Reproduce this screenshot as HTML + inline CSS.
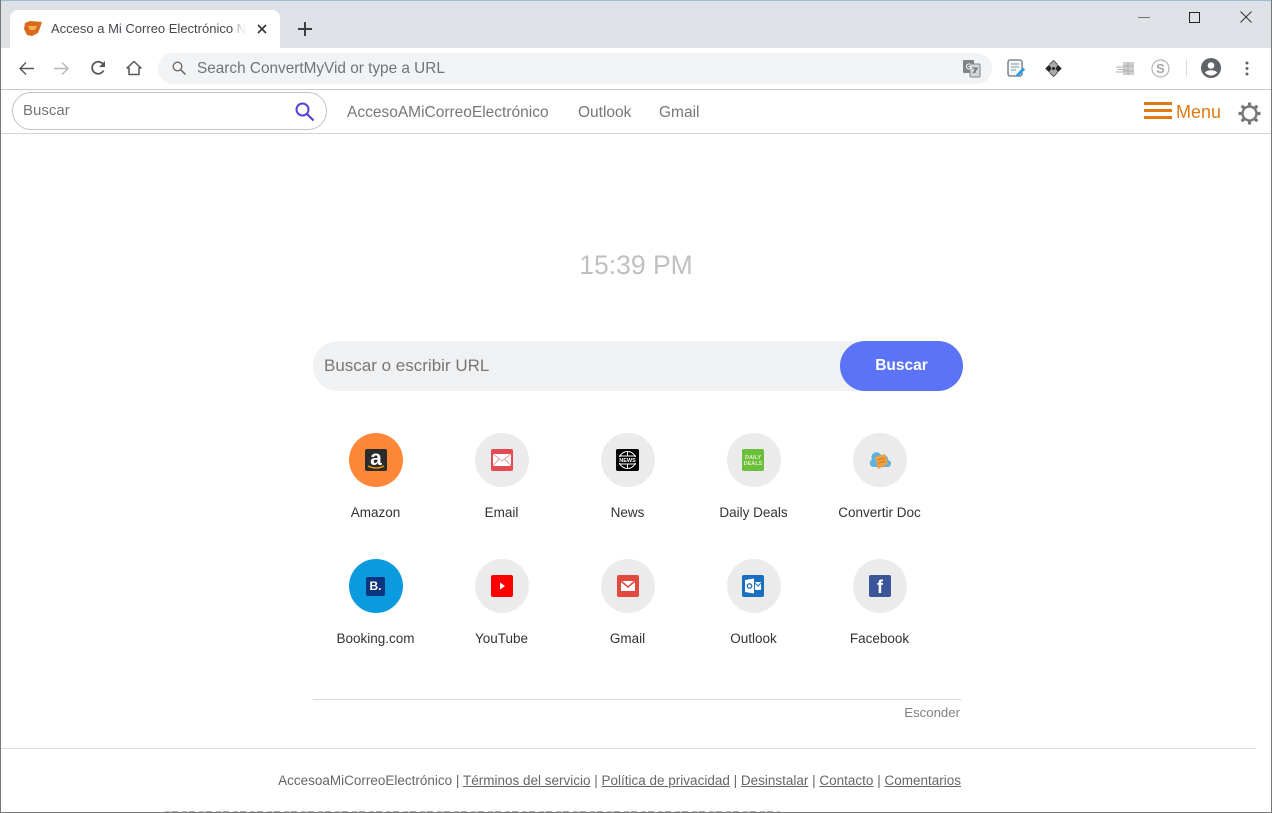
<!DOCTYPE html>
<html lang="es"><head><meta charset="utf-8"><title>Acceso a Mi Correo Electrónico</title>
<style>
html,body{margin:0;padding:0;width:1272px;height:813px;overflow:hidden;background:#fff}
body{position:relative;font-family:"Liberation Sans",sans-serif;color:#333}
.a{position:absolute;white-space:nowrap}
svg{position:absolute;overflow:visible}
.c{position:absolute;width:54px;height:54px;border-radius:50%;background:#ebebeb}
.l{position:absolute;width:126px;text-align:center;font-size:13.5px;line-height:16px;color:#333}
.s{position:absolute;width:22px;height:22px;border-radius:2px}
.nav{position:absolute;top:104px;font-size:15.5px;line-height:18px;color:#777;white-space:nowrap}
u{text-decoration:underline}
</style></head><body>
<!-- chrome top -->
<div class="a" style="left:0;top:0;width:1272px;height:48px;background:#dee1e6"></div>
<div class="a" style="left:0;top:0;width:1272px;height:1px;background:#9fbcd6"></div>
<div class="a" style="left:10px;top:10px;width:270px;height:38px;background:#fff;border-radius:8px 8px 0 0"></div>
<svg style="left:23px;top:20px" width="20" height="17" viewBox="0 0 20 17"><path d="M2 3L7 1L19 2L17 8L15 13L9 16L4 15L1 9Z" fill="#d9691c"/><path d="M5 6H14L12 10H7Z" fill="#f3b155"/></svg>
<div class="a" style="left:51px;top:21px;width:197px;overflow:hidden;font-size:13px;line-height:16px;color:#45484d">Acceso a Mi Correo Electrónico N</div>
<div class="a" style="left:234px;top:20px;width:14px;height:18px;background:linear-gradient(90deg,rgba(255,255,255,.4),rgba(255,255,255,.85) 60%,#fff)"></div>
<svg style="left:257px;top:24px" width="10" height="10"><path d="M1 1L9 9M9 1L1 9" stroke="#333" stroke-width="1.6"/></svg>
<svg style="left:298px;top:22px" width="14" height="14"><path d="M7 0V14M0 7H14" stroke="#3c4043" stroke-width="2"/></svg>
<!-- window controls -->
<div class="a" style="left:1138px;top:16.500px;width:12px;height:1.500px;background:#777"></div>
<div class="a" style="left:1189px;top:12px;width:9px;height:9px;border:1px solid #222"></div>
<svg style="left:1240px;top:11px" width="12" height="12"><path d="M.5 .5L11.5 11.5M11.5 .5L.5 11.5" stroke="#333" stroke-width="1"/></svg>
<!-- toolbar -->
<div class="a" style="left:0;top:48px;width:1272px;height:41px;background:#fff;border-bottom:1px solid #c9c9c9"></div>
<svg style="left:18px;top:61px" width="16" height="16"><path d="M16 7.500H2M8 1.500L2 7.500L8 13.500" fill="none" stroke="#54585d" stroke-width="1.400"/></svg>
<svg style="left:54px;top:61px" width="16" height="16"><path d="M0 7.500H14M8 1.500L14 7.500L8 13.500" fill="none" stroke="#b4b6b9" stroke-width="1.400"/></svg>
<svg style="left:90px;top:60px" width="16" height="16" viewBox="0 0 16 16"><path d="M13.500 10.500A6 6 0 1 1 13.500 5" fill="none" stroke="#54585d" stroke-width="1.800"/><path d="M15 1V7H9Z" fill="#54585d"/></svg>
<svg style="left:126px;top:60px" width="16" height="16" viewBox="0 0 16 16"><path d="M8 1.500L1 8H3V14.500H13V8H15ZM8 1.500" fill="none" stroke="#54585d" stroke-width="1.500" stroke-linejoin="round"/></svg>
<div class="a" style="left:158px;top:53px;width:834px;height:31px;background:#f1f3f4;border-radius:16px"></div>
<svg style="left:172px;top:61px" width="15" height="15"><circle cx="5.500" cy="5.500" r="4.300" fill="none" stroke="#666" stroke-width="1.300"/><path d="M8.800 8.800L13.500 13.500" stroke="#666" stroke-width="1.500"/></svg>
<div class="a" style="left:197px;top:60px;font-size:15.350px;line-height:18px;color:#70757a">Search ConvertMyVid or type a URL</div>
<svg style="left:963px;top:60px" width="18" height="18" viewBox="0 0 18 18"><rect x="0" y="0" width="11" height="13" rx="1" fill="#808589"/><rect x="7" y="4" width="10" height="13" rx="1" fill="#d4d6d8" stroke="#808589"/><path d="M7.500 4.500A2.500 2.500 0 1 0 7.500 8.500V6.500H5.500" fill="none" stroke="#fff" stroke-width="1"/><path d="M9 8H15M12 8V13M10 13L14 9" fill="none" stroke="#666" stroke-width="1"/></svg>
<svg style="left:1007px;top:59px" width="20" height="20" viewBox="0 0 20 20"><rect x="1" y="1" width="14" height="16" rx="2" fill="#f4f6f8" stroke="#6a7480" stroke-width="1.300"/><path d="M4 5H12M4 8H12M4 11H9" stroke="#9aa8b5" stroke-width="1.200"/><path d="M10 17L17 9.500" stroke="#2c9be8" stroke-width="3"/></svg>
<svg style="left:1045px;top:60px" width="17" height="17" viewBox="0 0 17 17"><path d="M8.500 0L17 8.500L8.500 17L0 8.500Z" fill="#aaa"/><path d="M0.500 8.500L4 5L6.500 8.500L4 12ZM16.500 8.500L13 5L10.500 8.500L13 12Z" fill="#222"/><circle cx="8.500" cy="8.500" r="1.500" fill="#222"/><path d="M8.500 .5L12.500 4.500M8.500 .5L4.500 4.500M8.500 16.500L12.500 12.500M8.500 16.500L4.500 12.500" stroke="#555" stroke-width="1"/></svg>
<svg style="left:1116px;top:61px" width="19" height="15" viewBox="0 0 19 15"><rect x="7" y="1" width="11" height="13" fill="#cfcfcf"/><path d="M0 6H7M2 8.500H9M0 11H7M12 1V14M7 5H18M7 10H18" stroke="#adadad"/></svg>
<svg style="left:1151px;top:59px" width="19" height="19"><circle cx="9.500" cy="9.500" r="8.500" fill="none" stroke="#b4b4b4" stroke-width="1.200"/><text x="9.500" y="14" text-anchor="middle" font-size="13" font-weight="700" font-family="Liberation Sans" fill="#a6a6a6">S</text></svg>
<div class="a" style="left:1186px;top:59px;width:1px;height:18px;background:#dadce0"></div>
<svg style="left:1201px;top:58px" width="20" height="20" viewBox="0 0 20 20"><circle cx="10" cy="10" r="10" fill="#5f6368"/><circle cx="10" cy="7.500" r="3.300" fill="#fff"/><path d="M3.800 14.500C6 11.500 14 11.500 16.200 14.500C14.500 16.500 12 17.500 10 17.500C8 17.500 5.500 16.500 3.800 14.500Z" fill="#fff"/></svg>
<svg style="left:1245px;top:61px" width="4" height="15"><circle cx="2" cy="2" r="1.500" fill="#5f6368"/><circle cx="2" cy="7.500" r="1.500" fill="#5f6368"/><circle cx="2" cy="13" r="1.500" fill="#5f6368"/></svg>
<!-- nav bar -->
<div class="a" style="left:0;top:133px;width:1272px;height:1px;background:#d4d4d4"></div>
<div class="a" style="left:12px;top:92px;width:313px;height:36px;border:1px solid #c4c4c4;border-radius:19px;background:#fff"></div>
<div class="a" style="left:23px;top:102px;font-size:15px;line-height:18px;color:#757575">Buscar</div>
<svg style="left:295px;top:102px" width="19" height="19"><circle cx="7.500" cy="7.500" r="6" fill="none" stroke="#5b3fd6" stroke-width="2"/><path d="M12 12L18.500 18.500" stroke="#5b3fd6" stroke-width="2.200"/></svg>
<div class="nav" style="left:347px">AccesoAMiCorreoElectrónico</div>
<div class="nav" style="left:578px">Outlook</div>
<div class="nav" style="left:659px">Gmail</div>
<div class="a" style="left:1144px;top:102px;width:28px;height:3px;background:#e07a14"></div>
<div class="a" style="left:1144px;top:109px;width:28px;height:3px;background:#e07a14"></div>
<div class="a" style="left:1144px;top:116px;width:28px;height:3px;background:#e07a14"></div>
<div class="a" style="left:1176px;top:102px;font-size:18px;line-height:21px;color:#e07a14">Menu</div>
<svg style="left:1238px;top:102px" width="23" height="23" viewBox="0 0 23 23"><circle cx="11.500" cy="11.500" r="7" fill="none" stroke="#777" stroke-width="2.400"/><path d="M11.500 0.500V4.500M11.500 18.500V22.500M.5 11.500H4.500M18.500 11.500H22.500M3.700 3.700L6.500 6.500M16.500 16.500L19.300 19.300M19.300 3.700L16.500 6.500M6.500 16.500L3.700 19.300" stroke="#777" stroke-width="3.200"/></svg>
<!-- main -->
<div class="a" style="left:436px;width:400px;top:248px;text-align:center;font-size:26.500px;line-height:34px;color:#c0c0c0">15:39 PM</div>
<div class="a" style="left:313px;top:341px;width:650px;height:50px;background:#f0f1f3;border-radius:25px"></div>
<div class="a" style="left:840px;top:341px;width:123px;height:50px;background:#5b73f6;border-radius:25px"></div>
<div class="a" style="left:324px;top:356px;font-size:17px;line-height:20px;color:#777">Buscar o escribir URL</div>
<div class="a" style="left:840px;top:356px;width:123px;text-align:center;font-size:15.500px;line-height:20px;font-weight:700;color:#fff">Buscar</div>
<!-- row 1 -->
<div class="c" style="left:349px;top:433px;background:#ff8838"></div>
<div class="s" style="left:365px;top:449px;background:#2b2b2b"></div>
<div class="a" style="left:365px;top:447px;width:22px;text-align:center;font-size:21px;line-height:24px;font-weight:700;color:#fff">a</div>
<svg style="left:367px;top:465px" width="18" height="5"><path d="M1 1Q9 5 17 1" fill="none" stroke="#f90" stroke-width="1.300"/></svg>
<div class="l" style="left:312.500px;top:505px">Amazon</div>
<div class="c" style="left:475px;top:433px"></div>
<div class="s" style="left:491px;top:449px;background:#e14b52"></div>
<svg style="left:491px;top:449px" width="22" height="22"><rect x="2" y="5" width="18" height="12" fill="#fff"/><path d="M2 5L11 12L20 5M2 17L8 10M20 17L14 10" fill="none" stroke="#e8a0a4" stroke-width="1"/></svg>
<div class="l" style="left:438.500px;top:505px">Email</div>
<div class="c" style="left:601px;top:433px"></div>
<div class="s" style="left:616px;top:449px;width:23px;background:#000"></div>
<svg style="left:616px;top:449px" width="23" height="22"><circle cx="11.500" cy="11" r="8.500" fill="none" stroke="#fff"/><path d="M3 7H20M3 15H20M11.500 2.500V7M11.500 15V19.500" stroke="#fff"/><rect x="2" y="8" width="19" height="6" fill="#000"/><text x="11.500" y="13" text-anchor="middle" font-size="5.500" font-weight="700" font-family="Liberation Sans" fill="#fff">NEWS</text></svg>
<div class="l" style="left:564.500px;top:505px">News</div>
<div class="c" style="left:727px;top:433px"></div>
<div class="s" style="left:742px;top:449px;background:#6cbf3a"></div>
<div class="a" style="left:742px;top:455px;width:22px;text-align:center;font-size:5.500px;line-height:6px;font-weight:700;color:#d9f0c5">DAILY<br>DEALS</div>
<div class="l" style="left:690.500px;top:505px">Daily Deals</div>
<div class="c" style="left:853px;top:433px"></div>
<svg style="left:870px;top:452px" width="20" height="18" viewBox="0 0 20 18"><path d="M3 15A4 4 0 0 1 2 7.500A5 5 0 0 1 11 3A5 5 0 0 1 18 8A3.500 3.500 0 0 1 17 15Z" fill="#5eb1e0"/><path d="M5 5L15 2L18 12L8 17Z" fill="#f0a040"/><path d="M7.500 8L15 6M8.500 11L15.500 9" stroke="#c97a1e"/></svg>
<div class="l" style="left:816.500px;top:505px">Convertir Doc</div>
<!-- row 2 -->
<div class="c" style="left:349px;top:559px;background:#0c9ade"></div>
<div class="s" style="left:366px;top:577px;width:19px;height:19px;background:#0c3580"></div>
<div class="a" style="left:366px;top:578px;width:19px;text-align:center;font-size:12px;line-height:17px;font-weight:700;color:#fff">B.</div>
<div class="l" style="left:312.500px;top:631px">Booking.com</div>
<div class="c" style="left:475px;top:559px"></div>
<div class="s" style="left:491px;top:575px;background:#ff0000"></div>
<svg style="left:491px;top:575px" width="22" height="22"><path d="M9 7.500L14 11L9 14.500Z" fill="#fff"/></svg>
<div class="l" style="left:438.500px;top:631px">YouTube</div>
<div class="c" style="left:601px;top:559px"></div>
<div class="s" style="left:617px;top:575px;background:#e2493f"></div>
<svg style="left:617px;top:575px" width="22" height="22"><rect x="4" y="6" width="14" height="10" fill="#fff"/><path d="M4 6L11 12L18 6" fill="none" stroke="#e2493f" stroke-width="1.600"/></svg>
<div class="l" style="left:564.500px;top:631px">Gmail</div>
<div class="c" style="left:727px;top:559px"></div>
<div class="s" style="left:742px;top:575px;background:#1a6fc0"></div>
<svg style="left:742px;top:575px" width="22" height="22"><path d="M3 5L12 3.500V18.500L3 17Z" fill="#fff"/><circle cx="7.500" cy="11" r="2.200" fill="none" stroke="#1a6fc0" stroke-width="1.300"/><path d="M13 7H19V15H13Z" fill="#fff"/><path d="M13 8L16 11L19 8" fill="none" stroke="#1a6fc0"/></svg>
<div class="l" style="left:690.500px;top:631px">Outlook</div>
<div class="c" style="left:853px;top:559px"></div>
<div class="s" style="left:869px;top:575px;background:#3b5598"></div>
<div class="a" style="left:869px;top:576px;width:22px;text-align:center;font-size:18px;line-height:22px;font-weight:700;color:#fff">f</div>
<div class="l" style="left:816.500px;top:631px">Facebook</div>
<!-- footer -->
<div class="a" style="left:313px;top:699px;width:648px;height:1px;background:#d8d8d8"></div>
<div class="a" style="right:312px;top:705px;font-size:13.200px;line-height:16px;color:#808080">Esconder</div>
<div class="a" style="left:0;top:748px;width:1256px;height:1px;background:#dcdcdc"></div>
<div class="a" style="right:311px;top:773px;font-size:13.500px;line-height:16px;color:#666">AccesoaMiCorreoElectrónico | <u>Términos del servicio</u> | <u>Política de privacidad</u> | <u>Desinstalar</u> | <u>Contacto</u> | <u>Comentarios</u></div>
<div class="a" style="left:165px;top:811px;width:615px;height:1px;background:repeating-linear-gradient(90deg,#bbb 0 5px,#fff 5px 7px,#aaa 7px 13px,#fff 13px 17px)"></div>
<!-- window borders -->
<div class="a" style="left:0;top:0;width:1px;height:813px;background:#777"></div>
<div class="a" style="right:0;top:0;width:1px;height:813px;background:#777"></div>
<div class="a" style="left:0;top:812px;width:1272px;height:1px;background:#777"></div>
</body></html>
